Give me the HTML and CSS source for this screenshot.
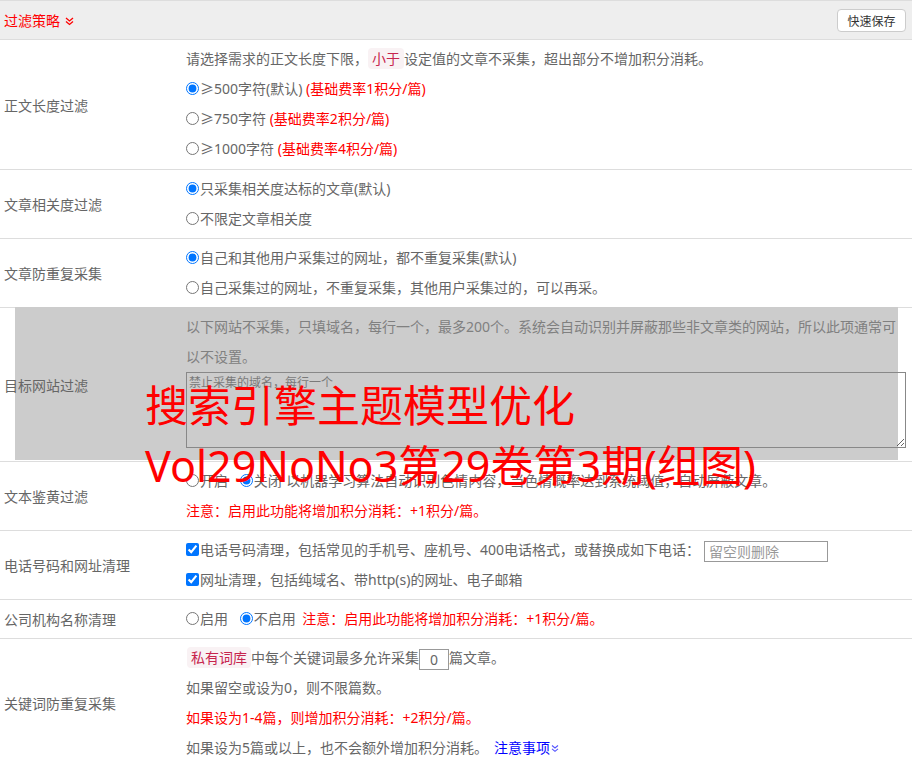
FILE: index.html
```html
<!DOCTYPE html>
<html lang="zh-CN">
<head>
<meta charset="utf-8">
<title>过滤策略</title>
<link rel="stylesheet" href="styles.css">
</head>
<body>
<div class="panel">
  <div class="head">
    <span class="title">过滤策略
      <svg class="chev" width="9" height="10" viewBox="0 0 9 10"><path d="M1 2 L4.5 5 L8 2 M1 5.5 L4.5 8.5 L8 5.5" fill="none" stroke="#f00" stroke-width="1.3"/></svg>
    </span>
    <button class="btn" type="button">快速保存</button>
  </div>

  <div class="row row-first">
    <div class="label">正文长度过滤</div>
    <div class="body">
      <div class="line">请选择需求的正文长度下限，<span class="tag">小于</span>设定值的文章不采集，超出部分不增加积分消耗。</div>
      <div class="line"><label><input type="radio" name="len" checked>≥500字符(默认)</label> <span class="red">(基础费率1积分/篇)</span></div>
      <div class="line"><label><input type="radio" name="len">≥750字符</label> <span class="red">(基础费率2积分/篇)</span></div>
      <div class="line"><label><input type="radio" name="len">≥1000字符</label> <span class="red">(基础费率4积分/篇)</span></div>
    </div>
  </div>

  <div class="row">
    <div class="label">文章相关度过滤</div>
    <div class="body">
      <div class="line"><label><input type="radio" name="rel" checked>只采集相关度达标的文章(默认)</label></div>
      <div class="line"><label><input type="radio" name="rel">不限定文章相关度</label></div>
    </div>
  </div>

  <div class="row">
    <div class="label">文章防重复采集</div>
    <div class="body">
      <div class="line"><label><input type="radio" name="dup" checked>自己和其他用户采集过的网址，都不重复采集(默认)</label></div>
      <div class="line"><label><input type="radio" name="dup">自己采集过的网址，不重复采集，其他用户采集过的，可以再采。</label></div>
    </div>
  </div>

  <div class="row row-site">
    <div class="shade"></div>
    <div class="label">目标网站过滤</div>
    <div class="body">
      <div class="para">以下网站不采集，只填域名，每行一个，最多200个。系统会自动识别并屏蔽那些非文章类的网站，所以此项通常可以不设置。</div>
      <textarea class="area" placeholder="禁止采集的域名，每行一个"></textarea>
    </div>
  </div>

  <div class="row">
    <div class="label">文本鉴黄过滤</div>
    <div class="body">
      <div class="line"><label class="opt"><input type="radio" name="porn">开启</label> <label class="opt-last"><input type="radio" name="porn" checked>关闭</label> 以机器学习算法自动识别色情内容，当色情概率达到系统阈值，自动屏蔽文章。</div>
      <div class="line red">注意：启用此功能将增加积分消耗：+1积分/篇。</div>
    </div>
  </div>

  <div class="row">
    <div class="label">电话号码和网址清理</div>
    <div class="body">
      <div class="line"><label><input type="checkbox" checked>电话号码清理，包括常见的手机号、座机号、400电话格式，或替换成如下电话：</label><input class="phone" type="text" placeholder="留空则删除"></div>
      <div class="line"><label><input type="checkbox" checked>网址清理，包括纯域名、带http(s)的网址、电子邮箱</label></div>
    </div>
  </div>

  <div class="row">
    <div class="label">公司机构名称清理</div>
    <div class="body">
      <div class="line"><label class="opt"><input type="radio" name="org">启用</label> <label class="opt-mid"><input type="radio" name="org" checked>不启用</label> <span class="red">注意：启用此功能将增加积分消耗：+1积分/篇。</span></div>
    </div>
  </div>

  <div class="row row-last">
    <div class="label">关键词防重复采集</div>
    <div class="body">
      <div class="line"><span class="tag tag-lib">私有词库</span>中每个关键词最多允许采集<input class="num" type="text" value="0">篇文章。</div>
      <div class="line">如果留空或设为0，则不限篇数。</div>
      <div class="line red">如果设为1-4篇，则增加积分消耗：+2积分/篇。</div>
      <div class="line">如果设为5篇或以上，也不会额外增加积分消耗。<a class="link" href="#">注意事项<svg class="chev-s" width="8" height="9" viewBox="0 0 8 9"><path d="M1 1.5 L4 4 L7 1.5 M1 4.8 L4 7.3 L7 4.8" fill="none" stroke="#55f" stroke-width="1.1"/></svg></a></div>
    </div>
  </div>

  <div class="big-title">搜索引擎主题模型优化<br>Vol29NoNo3第29卷第3期(组图)</div>
</div>
</body>
</html>
```

FILE: styles.css
```css
* {
  box-sizing: border-box;
}

html, body {
  margin: 0;
  padding: 0;
  background: #fff;
}

body {
  font-family: "Noto Sans", "Noto Sans CJK SC", sans-serif;
  font-size: 14px;
  color: #666;
  overflow: hidden;
}

.panel {
  position: relative;
  width: 912px;
}

.head {
  display: flex;
  align-items: center;
  justify-content: space-between;
  height: 40px;
  background: #eee;
  border-top: 1px solid #ddd;
  border-bottom: 1px solid #ddd;
  padding: 0 6px 0 4px;
}

.title {
  display: flex;
  align-items: center;
  gap: 5px;
  color: #f00;
  font-size: 14px;
}

.chev {
  display: block;
  margin-top: 1px;
}

.btn {
  width: 69px;
  height: 23px;
  padding: 0;
  margin-top: 1px;
  background: #fff;
  border: 1px solid #ccc;
  border-radius: 4px;
  font-family: "Noto Sans CJK SC", sans-serif;
  font-size: 12px;
  color: #333;
}

.row {
  position: relative;
  display: flex;
  border-bottom: 1px solid #ddd;
}

.row-last {
  border-bottom: none;
}

.label {
  position: relative;
  z-index: 1;
  width: 186px;
  padding-left: 4px;
  display: flex;
  align-items: center;
}

.body {
  position: relative;
  z-index: 1;
  width: 720px;
  padding: 4px 0;
}

.row-first .body {
  padding-bottom: 5px;
}

.row-last .body {
  padding-top: 4px;
}

.line {
  height: 30px;
  line-height: 30px;
  white-space: nowrap;
}

.para {
  line-height: 30px;
}

.red {
  color: #f00;
}

input[type="radio"],
input[type="checkbox"] {
  width: 13px;
  height: 13px;
  margin: 0 1px 0 0;
  vertical-align: -1px;
}

.opt {
  margin-right: 8px;
}

.opt-last {
  margin-right: 1px;
}

.opt-mid {
  margin-right: 3px;
}

.tag {
  background: #f9f2f4;
  color: #c7254e;
  padding: 1px 4px;
  border-radius: 4px;
}

.tag-lib {
  margin-left: 1px;
}

.row-site .shade {
  position: absolute;
  z-index: 0;
  left: 15px;
  top: -1px;
  width: 883px;
  height: 153px;
  background: #ccc;
}

.row-site .para {
  color: #808080;
}

.area {
  display: block;
  width: 720px;
  height: 76px;
  margin: 0 0 9px 0;
  padding: 2px 2px;
  background: transparent;
  border: 1px solid #888;
  font-family: "Noto Sans", "Noto Sans CJK SC", sans-serif;
  font-size: 12px;
  line-height: 16px;
  color: #666;
}

.area::placeholder {
  color: #7a7a7a;
}

.phone {
  width: 124px;
  height: 21px;
  margin-left: 4px;
  padding: 0 4px;
  border: 1px solid #999;
  font-family: "Noto Sans", "Noto Sans CJK SC", sans-serif;
  font-size: 14px;
  color: #666;
  vertical-align: middle;
}

.phone::placeholder {
  color: #999;
}

.num {
  width: 30px;
  height: 21px;
  padding: 0;
  border: 1px solid #999;
  text-align: center;
  font-family: "Noto Sans", "Noto Sans CJK SC", sans-serif;
  font-size: 14px;
  color: #666;
  vertical-align: middle;
}

.link {
  color: #00f;
  text-decoration: none;
  margin-left: 6px;
}

.chev-s {
  vertical-align: 0;
  margin-left: 1px;
}

.big-title {
  position: absolute;
  z-index: 5;
  left: 145px;
  top: 376px;
  font-family: "Noto Sans", "Noto Sans CJK SC", sans-serif;
  font-size: 43px;
  line-height: 60px;
  color: #f00;
  white-space: nowrap;
  pointer-events: none;
}
```
